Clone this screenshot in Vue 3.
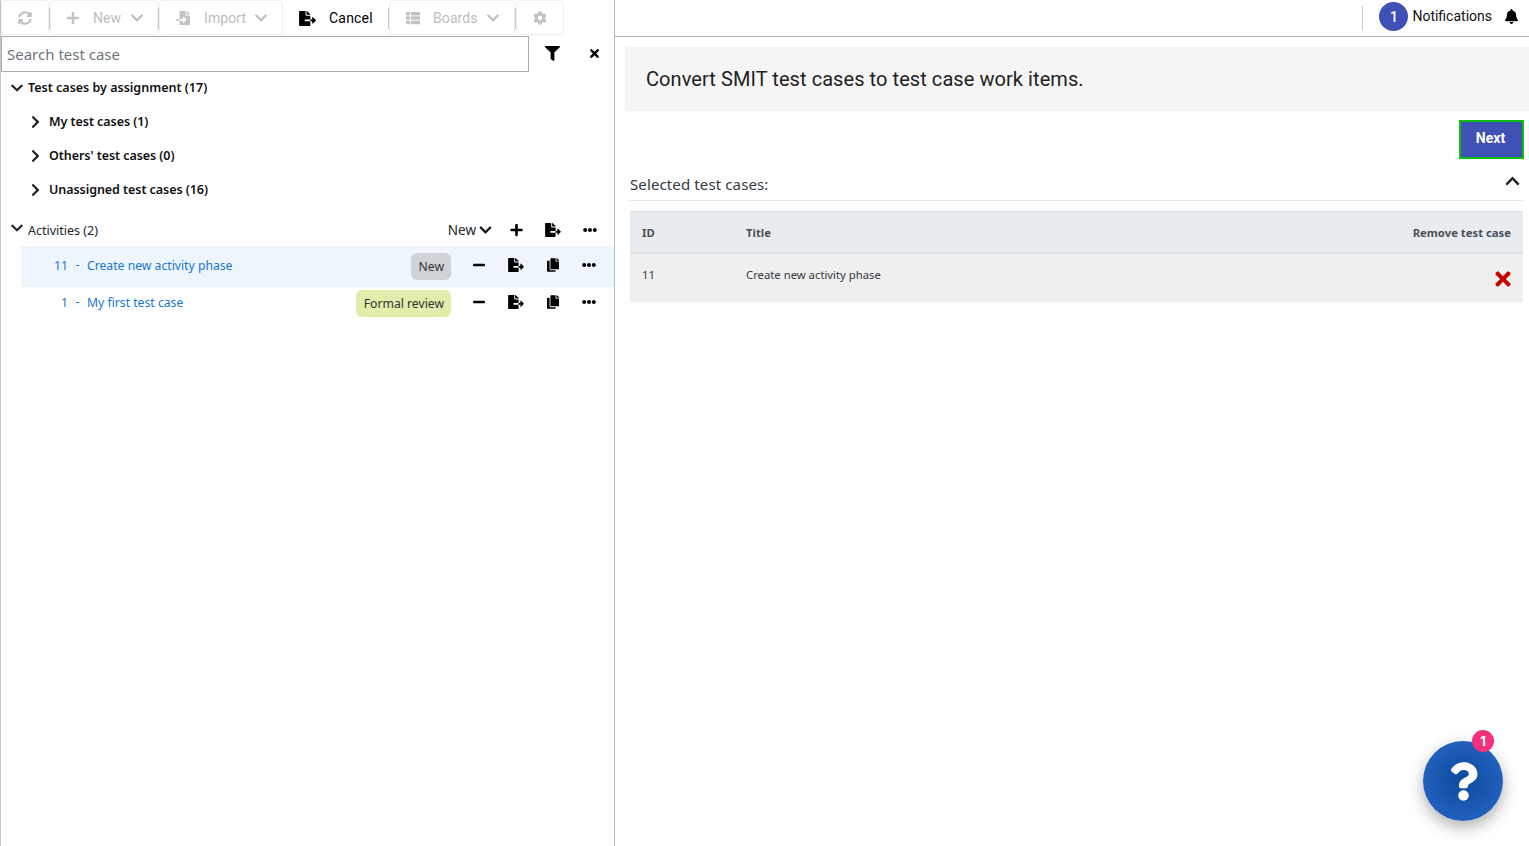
<script setup>
const icons = {
  refresh: { vb: '0 0 512 512', d: 'M370.72 133.28C339.458 104.008 298.888 87.962 255.848 88c-77.458.068-144.328 53.178-162.791 126.85-1.344 5.363-6.122 9.15-11.651 9.15H24.103c-7.498 0-13.194-6.807-11.807-14.176C33.933 94.924 134.813 8 256 8c66.448 0 126.791 26.136 171.315 68.685L463.03 40.97C478.149 25.851 504 36.559 504 57.941V192c0 13.255-10.745 24-24 24H345.941c-21.382 0-32.09-25.851-16.971-40.971l41.75-41.749zM32 296h134.059c21.382 0 32.09 25.851 16.971 40.971l-41.75 41.75c31.262 29.273 71.835 45.319 114.876 45.28 77.418-.07 144.315-53.144 162.787-126.849 1.344-5.363 6.122-9.15 11.651-9.15h57.304c7.498 0 13.194 6.807 11.807 14.176C478.067 417.076 377.187 504 256 504c-66.448 0-126.791-26.136-171.315-68.685L48.97 471.03C33.851 486.149 8 475.441 8 454.059V320c0-13.255 10.745-24 24-24z' },
  plus: { vb: '0 0 448 512', d: 'M416 208H272V64c0-17.67-14.33-32-32-32h-32c-17.67 0-32 14.33-32 32v144H32c-17.67 0-32 14.33-32 32v32c0 17.67 14.33 32 32 32h144v144c0 17.67 14.33 32 32 32h32c17.67 0 32-14.33 32-32V304h144c17.67 0 32-14.33 32-32v-32c0-17.67-14.33-32-32-32z' },
  minus: { vb: '0 0 448 512', d: 'M416 208H32c-17.67 0-32 14.33-32 32v32c0 17.67 14.33 32 32 32h384c17.67 0 32-14.33 32-32v-32c0-17.67-14.33-32-32-32z' },
  chevDown: { vb: '0 0 448 512', d: 'M207.029 381.476L12.686 187.132c-9.373-9.373-9.373-24.569 0-33.941l22.667-22.667c9.357-9.357 24.522-9.375 33.901-.04L224 284.505l154.745-154.021c9.379-9.335 24.544-9.317 33.901.04l22.667 22.667c9.373 9.373 9.373 24.569 0 33.941L240.971 381.476c-9.373 9.372-24.569 9.372-33.942 0z' },
  chevUp: { vb: '0 0 448 512', d: 'M240.971 130.524l194.343 194.343c9.373 9.373 9.373 24.569 0 33.941l-22.667 22.667c-9.357 9.357-24.522 9.375-33.901.04L224 227.495 69.255 381.516c-9.379 9.335-24.544 9.317-33.901-.04l-22.667-22.667c-9.373-9.373-9.373-24.569 0-33.941L207.03 130.525c9.372-9.373 24.568-9.373 33.941-.001z' },
  chevRight: { vb: '0 0 320 512', d: 'M285.476 272.971L91.132 467.314c-9.373 9.373-24.569 9.373-33.941 0l-22.667-22.667c-9.357-9.357-9.375-24.522-.04-33.901L188.505 256 34.484 101.255c-9.335-9.379-9.317-24.544.04-33.901l22.667-22.667c9.373-9.373 24.569-9.373 33.941 0L285.475 239.03c9.373 9.372 9.373 24.568.001 33.941z' },
  exportDoc: { vb: '0 0 576 512', d: 'M384 121.9c0-6.3-2.5-12.4-7-16.9L279.1 7c-4.5-4.5-10.6-7-17-7H256v128h128v-6.1zM571 308l-95.7-96.4c-10.1-10.1-27.4-3-27.4 8.5V288h-64v64h64v65.8c0 11.4 17.3 18.6 27.4 8.5L571 332c6.6-6.6 6.6-17.4 0-24zm-379 28v-32c0-8.8 7.2-16 16-16h176V160H248c-13.2 0-24-10.8-24-24V0H24C10.7 0 0 10.7 0 24v464c0 13.3 10.7 24 24 24h336c13.3 0 24-10.7 24-24V352H208c-8.8 0-16-7.2-16-16z' },
  importDoc: { vb: '0 0 512 512', d: 'M16 288c-8.8 0-16 7.2-16 16v32c0 8.8 7.2 16 16 16h112v-64zm489-183L407.1 7c-4.5-4.5-10.6-7-17-7H384v128h128v-6.1c0-6.3-2.5-12.4-7-16.9zm-153 31V0H152c-13.3 0-24 10.7-24 24v264h128v-65.2c0-14.3 17.3-21.4 27.4-11.3L379 308c6.6 6.7 6.6 17.4 0 24l-95.7 96.4c-10.1 10.1-27.4 3-27.4-11.3V352H128v136c0 13.3 10.7 24 24 24h336c13.3 0 24-10.7 24-24V160H376c-13.2 0-24-10.8-24-24z' },
  table: { vb: '0 0 512 512', d: 'M149.333 216v80c0 13.255-10.745 24-24 24H24c-13.255 0-24-10.745-24-24v-80c0-13.255 10.745-24 24-24h101.333c13.255 0 24 10.745 24 24zM0 376v80c0 13.255 10.745 24 24 24h101.333c13.255 0 24-10.745 24-24v-80c0-13.255-10.745-24-24-24H24c-13.255 0-24 10.745-24 24zM125.333 32H24C10.745 32 0 42.745 0 56v80c0 13.255 10.745 24 24 24h101.333c13.255 0 24-10.745 24-24V56c0-13.255-10.745-24-24-24zm80 448H488c13.255 0 24-10.745 24-24v-80c0-13.255-10.745-24-24-24H205.333c-13.255 0-24 10.745-24 24v80c0 13.255 10.745 24 24 24zm-24-424v80c0 13.255 10.745 24 24 24H488c13.255 0 24-10.745 24-24V56c0-13.255-10.745-24-24-24H205.333c-13.255 0-24 10.745-24 24zm24 264H488c13.255 0 24-10.745 24-24v-80c0-13.255-10.745-24-24-24H205.333c-13.255 0-24 10.745-24 24v80c0 13.255 10.745 24 24 24z' },
  gear: { vb: '0 0 512 512', d: 'M487.4 315.7l-42.6-24.6c4.3-23.2 4.3-47 0-70.2l42.6-24.6c4.9-2.8 7.1-8.6 5.5-14-11.1-35.6-30-67.8-54.7-94.6-3.8-4.1-10-5.1-14.8-2.3L380.8 110c-17.9-15.4-38.5-27.3-60.8-35.1V25.8c0-5.6-3.9-10.5-9.4-11.7-36.7-8.2-74.3-7.8-109.2 0-5.5 1.2-9.4 6.1-9.4 11.7V75c-22.2 7.9-42.8 19.8-60.8 35.1L88.7 85.5c-4.9-2.8-11-1.9-14.8 2.3-24.7 26.7-43.6 58.9-54.7 94.6-1.7 5.4.6 11.2 5.5 14L67.3 221c-4.3 23.2-4.3 47 0 70.2l-42.6 24.6c-4.9 2.8-7.1 8.6-5.5 14 11.1 35.6 30 67.8 54.7 94.6 3.8 4.1 10 5.1 14.8 2.3l42.6-24.6c17.9 15.4 38.5 27.3 60.8 35.1v49.2c0 5.6 3.9 10.5 9.4 11.7 36.7 8.2 74.3 7.8 109.2 0 5.5-1.2 9.4-6.1 9.4-11.7v-49.2c22.2-7.9 42.8-19.8 60.8-35.1l42.6 24.6c4.9 2.8 11 1.9 14.8-2.3 24.7-26.7 43.6-58.9 54.7-94.6 1.5-5.5-.7-11.3-5.6-14.1zM256 336c-44.1 0-80-35.9-80-80s35.9-80 80-80 80 35.9 80 80-35.9 80-80 80z' },
  filter: { vb: '0 0 512 512', d: 'M487.976 0H24.028C2.71 0-8.047 25.866 7.058 40.971L192 225.941V432c0 7.831 3.821 15.17 10.237 19.662l80 55.98C298.02 518.69 320 507.493 320 487.98V225.941l184.947-184.97C520.021 25.896 509.338 0 487.976 0z' },
  times: { vb: '0 0 352 512', d: 'M242.72 256l100.07-100.07c12.28-12.28 12.28-32.19 0-44.48l-22.24-22.24c-12.28-12.28-32.19-12.28-44.48 0L176 189.28 75.93 89.21c-12.28-12.28-32.19-12.28-44.48 0L9.21 111.45c-12.28 12.28-12.28 32.19 0 44.48L109.28 256 9.21 356.07c-12.28 12.28-12.28 32.19 0 44.48l22.24 22.24c12.28 12.28 32.2 12.28 44.48 0L176 322.72l100.07 100.07c12.28 12.28 32.2 12.28 44.48 0l22.24-22.24c12.28-12.28 12.28-32.19 0-44.48L242.72 256z' },
  copy: { vb: '0 0 448 512', d: 'M320 448v40c0 13.255-10.745 24-24 24H24c-13.255 0-24-10.745-24-24V120c0-13.255 10.745-24 24-24h72v296c0 30.879 25.121 56 56 56h168zm0-344V0H152c-13.255 0-24 10.745-24 24v368c0 13.255 10.745 24 24 24h272c13.255 0 24-10.745 24-24V128H344c-13.2 0-24-10.8-24-24zm120.971-31.029L375.029 7.029A24 24 0 0 0 358.059 0H352v96h96v-6.059a24 24 0 0 0-7.029-16.97z' },
  dots: { vb: '0 0 512 512', d: 'M328 256c0 39.8-32.2 72-72 72s-72-32.2-72-72 32.2-72 72-72 72 32.2 72 72zm104-72c-39.8 0-72 32.2-72 72s32.2 72 72 72 72-32.2 72-72-32.2-72-72-72zm-352 0c-39.8 0-72 32.2-72 72s32.2 72 72 72 72-32.2 72-72-32.2-72-72-72z' },
  bell: { vb: '0 0 448 512', d: 'M224 512c35.32 0 63.97-28.65 63.97-64H160.03c0 35.35 28.65 64 63.97 64zm215.39-149.71c-19.32-20.76-55.47-51.99-55.47-154.29 0-77.7-54.48-139.9-127.94-155.16V32c0-17.67-14.32-32-31.98-32s-31.98 14.33-31.98 32v20.84C118.56 68.1 64.08 130.3 64.08 208c0 102.3-36.15 133.53-55.47 154.29-6 6.45-8.66 14.16-8.61 21.71.11 16.4 12.98 32 32.1 32h383.8c19.12 0 32-15.6 32.1-32 .05-7.55-2.61-15.27-8.61-21.71z' },
  question: { vb: '0 0 384 512', d: 'M202.021 0C122.202 0 70.503 32.703 29.914 91.026c-7.363 10.58-5.093 25.086 5.178 32.874l43.138 32.709c10.373 7.865 25.132 6.026 33.253-4.148 25.049-31.381 43.63-49.449 82.757-49.449 30.764 0 68.816 19.799 68.816 49.631 0 22.552-18.617 34.134-48.993 51.164-35.423 19.86-82.299 44.576-82.299 106.405V320c0 13.255 10.745 24 24 24h72.471c13.255 0 24-10.745 24-24v-5.773c0-42.86 125.268-44.645 125.268-160.627C377.504 66.256 286.902 0 202.021 0zM192 373.459c-38.196 0-69.271 31.075-69.271 69.271 0 38.195 31.075 69.27 69.271 69.27s69.271-31.075 69.271-69.271-31.075-69.27-69.271-69.27z' }
}
const groups = ['My test cases (1)', "Others' test cases (0)", 'Unassigned test cases (16)']
const activities = [
  { id: '11', title: 'Create new activity phase', status: 'New', cls: 'status-new', active: true },
  { id: '1', title: 'My first test case', status: 'Formal review', cls: 'status-review', active: false }
]
</script>

<template>
  <div class="page">
    <aside class="left">
      <div class="toolbar">
        <button class="tool tool-refresh"><svg class="ti" :viewBox="icons.refresh.vb"><path :d="icons.refresh.d" /></svg></button>
        <i class="sep"></i>
        <button class="tool tool-new">
          <svg class="ti" :viewBox="icons.plus.vb"><path :d="icons.plus.d" /></svg><span>New</span>
          <svg class="tc" :viewBox="icons.chevDown.vb"><path :d="icons.chevDown.d" /></svg>
        </button>
        <i class="sep"></i>
        <button class="tool tool-import">
          <svg class="ti" :viewBox="icons.importDoc.vb"><path :d="icons.importDoc.d" /></svg><span>Import</span>
          <svg class="tc" :viewBox="icons.chevDown.vb"><path :d="icons.chevDown.d" /></svg>
        </button>
        <button class="cancel">
          <svg class="ci" :viewBox="icons.exportDoc.vb"><path :d="icons.exportDoc.d" /></svg><span>Cancel</span>
        </button>
        <i class="sep"></i>
        <button class="tool tool-boards">
          <svg class="ti" :viewBox="icons.table.vb"><path :d="icons.table.d" /></svg><span>Boards</span>
          <svg class="tc" :viewBox="icons.chevDown.vb"><path :d="icons.chevDown.d" /></svg>
        </button>
        <i class="sep"></i>
        <button class="tool tool-gear"><svg class="ti" :viewBox="icons.gear.vb"><path :d="icons.gear.d" /></svg></button>
      </div>

      <div class="search-row">
        <input class="search" placeholder="Search test case" />
        <svg class="filter" :viewBox="icons.filter.vb"><path :d="icons.filter.d" /></svg>
        <svg class="close" :viewBox="icons.times.vb"><path :d="icons.times.d" /></svg>
      </div>

      <div class="tree-head">
        <svg class="chev" :viewBox="icons.chevDown.vb"><path :d="icons.chevDown.d" /></svg>
        <span>Test cases by assignment (17)</span>
      </div>
      <div v-for="g in groups" :key="g" class="tree-child">
        <svg class="chev" :viewBox="icons.chevRight.vb"><path :d="icons.chevRight.d" /></svg>
        <span>{{ g }}</span>
      </div>

      <div class="act-head">
        <svg class="chev" :viewBox="icons.chevDown.vb"><path :d="icons.chevDown.d" /></svg>
        <span class="act-title">Activities (2)</span>
        <span class="act-new">New</span>
        <svg class="act-new-chev" :viewBox="icons.chevDown.vb"><path :d="icons.chevDown.d" /></svg>
        <svg class="ai plus" :viewBox="icons.plus.vb"><path :d="icons.plus.d" /></svg>
        <svg class="ai exp" :viewBox="icons.exportDoc.vb"><path :d="icons.exportDoc.d" /></svg>
        <svg class="ai dots" :viewBox="icons.dots.vb"><path :d="icons.dots.d" /></svg>
      </div>

      <div v-for="a in activities" :key="a.id" class="act-row" :class="{ active: a.active }">
        <span class="act-id">{{ a.id }}</span>
        <span class="act-dash">-</span>
        <a class="act-link">{{ a.title }}</a>
        <span class="status" :class="a.cls">{{ a.status }}</span>
        <svg class="ri minus" :viewBox="icons.minus.vb"><path :d="icons.minus.d" /></svg>
        <svg class="ri exp" :viewBox="icons.exportDoc.vb"><path :d="icons.exportDoc.d" /></svg>
        <svg class="ri copy" :viewBox="icons.copy.vb"><path :d="icons.copy.d" /></svg>
        <svg class="ri dots" :viewBox="icons.dots.vb"><path :d="icons.dots.d" /></svg>
      </div>
    </aside>

    <main class="right">
      <header class="top">
        <i class="top-sep"></i>
        <span class="count">1</span>
        <span class="notif">Notifications</span>
        <svg class="bell" :viewBox="icons.bell.vb"><path :d="icons.bell.d" /></svg>
      </header>

      <div class="content">
        <h1 class="banner">Convert SMIT test cases to test case work items.</h1>
        <div class="actions"><button class="next">Next</button></div>
        <div class="section">
          <span>Selected test cases:</span>
          <svg class="up" :viewBox="icons.chevUp.vb"><path :d="icons.chevUp.d" /></svg>
        </div>
        <div class="table">
          <div class="tr th">
            <span class="c-id">ID</span><span class="c-title">Title</span><span class="c-rm">Remove test case</span>
          </div>
          <div class="tr td">
            <span class="c-id">11</span><span class="c-title">Create new activity phase</span>
            <span class="c-rm"><svg class="cross" :viewBox="icons.times.vb"><path :d="icons.times.d" /></svg></span>
          </div>
        </div>
      </div>
    </main>

    <div class="fab">
      <svg class="q" :viewBox="icons.question.vb"><path :d="icons.question.d" /></svg>
      <span class="badge">1</span>
    </div>
  </div>
</template>

<style>
html, body { margin: 0; overflow: hidden; background: #fff; }
</style>

<style scoped>
.page { display: flex; height: 846px; width: 1529px; overflow: hidden; position: relative; font-family: "Noto Sans", sans-serif; color: #212529; }
svg { fill: currentColor; display: block; flex: none; }
button { font: inherit; background: none; padding: 0; cursor: default; }

.left { width: 613px; flex: none; border-left: 1px solid #c6c6c6; border-right: 1px solid #bdbdbd; }
.toolbar { display: flex; align-items: center; height: 36px; font-family: Roboto, sans-serif; font-size: 14px; }
.tool { display: flex; align-items: center; height: 35px; margin-top: -1px; box-sizing: border-box; border: 1px solid #eee; border-radius: 4px; color: #bdbdbd; letter-spacing: .1px; }
.sep { width: 1px; height: 21px; background: #c9c9c9; flex: none; }
.ti { width: 14px; height: 14px; color: #c3c3c3; }
.tc { width: 14px; height: 14px; color: #bdbdbd; }
.tool-refresh { width: 48px; justify-content: center; }
.tool-new { width: 108px; padding-left: 15px; }
.tool-new span { margin: 0 9px 0 13px; }
.tool-import { width: 124px; padding-left: 16px; }
.tool-import span { margin: 0 8px 0 14px; }
.cancel { width: 105px; height: 35px; border: 0; display: flex; align-items: center; padding-left: 16px; color: #000; font-weight: 400; letter-spacing: .2px; box-sizing: border-box; }
.ci { width: 17px; height: 15px; margin-right: 13px; }
.tool-boards { width: 126px; padding-left: 16px; }
.tool-boards span { margin: 0 8px 0 13px; }
.tool-gear { width: 48px; justify-content: center; }

.search-row { display: flex; align-items: center; height: 36px; }
.search { width: 528px; height: 36px; box-sizing: border-box; border: 1px solid #ababab; outline: 0; padding: 0 5px; font: 15px "Noto Sans", sans-serif; color: #212529; }
.search::placeholder { color: #6c757d; opacity: 1; }
.filter { width: 15px; height: 15px; margin: -2px 0 0 16px; color: #000; }
.close { width: 11px; height: 13px; margin: -2px 0 0 29px; color: #000; }

.tree-head, .tree-child { display: flex; align-items: center; height: 34px; font-size: 12.5px; font-weight: 600; color: #111; }
.tree-head { padding-left: 10px; margin-top: -2px; }
.tree-head .chev { margin-right: 5px; }
.tree-child { padding-left: 30px; letter-spacing: -.06px; }
.tree-child .chev { width: 9px; height: 14px; margin-right: 9px; }
.chev { width: 12px; height: 14px; color: #222; margin-top: 2px; }

.act-head { display: flex; align-items: center; height: 33px; margin-top: 7px; padding-left: 10px; font-size: 12.5px; color: #212529; }
.act-head .chev { margin: -3px 5px 0 0; }
.act-title { flex: 1; margin-top: 1px; }
.act-new { font-size: 13.5px; margin-top: 1px; }
.act-new-chev { width: 13px; height: 14px; margin-left: 3px; color: #111; }
.ai { color: #000; }
.ai.plus { width: 13px; height: 14px; margin-left: 18px; }
.ai.exp { width: 16px; height: 14px; margin-left: 22px; }
.ai.dots { width: 14px; height: 14px; margin: 0 17px 0 22px; }

.act-row { display: flex; align-items: center; height: 41px; margin-left: 20px; font-size: 12.2px; }
.act-row + .act-row { height: 33px; }
.act-row.active { background: #eef5fc; }
.act-id { width: 47px; text-align: right; color: #1577d2; margin-top: -2px; }
.act-dash { width: 19px; color: #1577d2; text-align: center; margin-top: -5px; }
.act-link { flex: 1; color: #1577d2; margin-top: -2px; }
.status { height: 27px; line-height: 27px; padding: 0 7px 0 8px; border-radius: 6px; color: #333; margin-top: -1px; }
.status-new { background: #cfd3d7; }
.status-review { background: #e2ecab; }
.ri { color: #000; margin-top: -3px; }
.ri.minus { width: 12px; height: 14px; margin-left: 22px; }
.ri.exp { width: 16px; height: 14px; margin-left: 23px; }
.ri.copy { width: 12px; height: 14px; margin-left: 23px; }
.ri.dots { width: 14px; height: 14px; margin: -3px 18px 0 23px; }

.right { flex: 1; min-width: 0; }
.top { display: flex; align-items: center; height: 36px; border-bottom: 1px solid #b3b3b3; font-family: Roboto, sans-serif; font-size: 14px; color: #111; }
.top-sep { width: 1px; height: 24px; background: #ccc; margin: 0 16px 0 auto; }
.count { width: 29px; height: 29px; border-radius: 50%; background: #3f51b5; color: #fff; display: flex; align-items: center; justify-content: center; font-weight: 500; margin-top: -3px; }
.notif { margin: -5px 12px 0 4px; }
.bell { width: 13px; height: 15px; margin: -3px 11px 0 1px; color: #000; }

.content { padding: 10px 5px 0 10px; }
.banner { margin: 0 -5px 0 0; height: 64px; padding-left: 21px; background: #f5f5f5; font: 400 20px/64px Roboto, sans-serif; letter-spacing: .07px; color: #222; }
.actions { display: flex; justify-content: flex-end; margin-top: 9px; }
.next { width: 65px; height: 39px; box-sizing: border-box; border: 2px solid #0cbf0c; background: #3f51b5; color: #fff; font: 700 14px Roboto, sans-serif; padding: 0 2px 3px 0; }
.section { display: flex; align-items: center; justify-content: space-between; height: 42px; padding-top: 8px; border-bottom: 1px solid #e5e7e9; margin: 0 1px 10px 4px; padding-left: 1px; font-size: 15px; letter-spacing: .12px; color: #343a40; box-sizing: border-box; }
.up { width: 15px; height: 16px; color: #222; margin: -6px 3px 0 0; }
.table { margin: 0 1px 0 5px; font-size: 11.3px; color: #343a40; }
.tr { display: flex; align-items: center; padding: 0 12px; box-sizing: border-box; }
.th { height: 43px; background: #e9ecef; border-top: 1px solid #dee2e6; border-bottom: 2px solid #dee2e6; font-weight: 700; color: #495057; font-size: 11.3px; }
.td { height: 48px; background: #efefef; }
.c-id { width: 104px; }
.c-title { flex: 1; }
.td .c-id, .td .c-title { margin-top: -7px; }
.cross { width: 18px; height: 22px; color: #c60000; margin: 1px -1px 0 0; }

.fab { position: absolute; left: 1423px; top: 741px; width: 80px; height: 80px; border-radius: 50%; background: radial-gradient(circle, #0d4a9c 0%, #2a69cc 100%); box-shadow: 0 6px 16px rgba(0,0,0,.32); display: flex; align-items: center; justify-content: center; }
.q { width: 29px; height: 39px; color: #fff; margin-left: 1px; }
.badge { position: absolute; left: 49px; top: -11px; width: 22px; height: 22px; border-radius: 50%; background: #f5317f; color: #fff; font: 700 13px/22px Inter, sans-serif; text-align: center; }
</style>
